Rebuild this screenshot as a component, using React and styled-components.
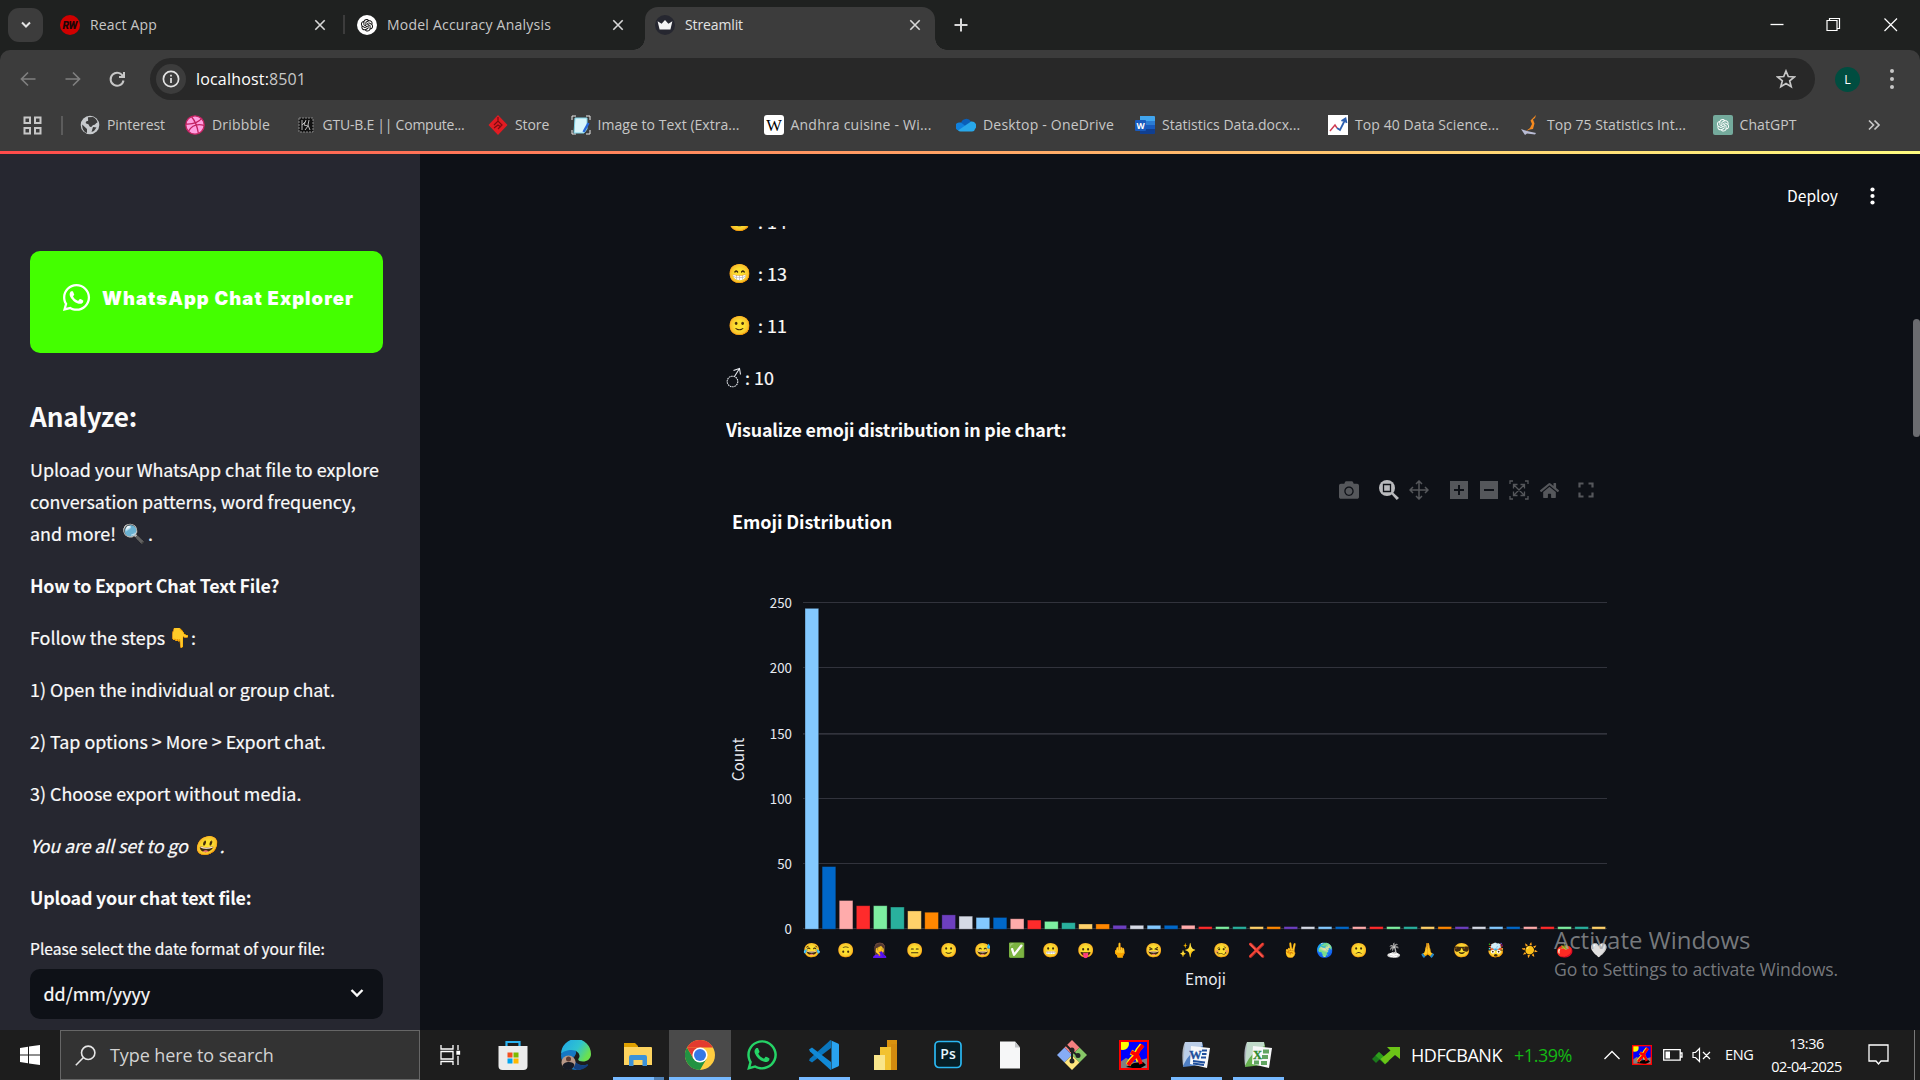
import React from "react";
import styled, { createGlobalStyle, css } from "styled-components";
import { FaWhatsapp, FaCamera, FaHome } from "react-icons/fa";
import { AiOutlineOpenAI } from "react-icons/ai";

const ui = '"Open Sans", "Noto Sans", sans-serif';
const doc = '"Noto Sans CJK SC", "Noto Color Emoji", sans-serif';

const Global = createGlobalStyle`
  * { box-sizing: border-box; }
  body { margin: 0; background: #0e1117; overflow: hidden; }
  p, h2 { margin: 0; }
  svg { display: block; flex: none; }
`;

const Screen = styled.div`
  width: 1920px;
  height: 1080px;
  display: flex;
  flex-direction: column;
  overflow: hidden;
  font-family: ${ui};
`;

const Label = styled.span`
  font-size: ${(p) => p.$size || 14}px;
  letter-spacing: ${(p) => p.$track || 0}px;
  color: ${(p) => p.$color || "#c7c7c7"};
  line-height: 1.3;
  white-space: pre;
`;

/* ---------- browser chrome ---------- */

const TabStrip = styled.header`
  height: 50px;
  flex: none;
  display: flex;
  background: #1f2120;
  padding-left: 8px;
`;

const TabSearch = styled.div`
  width: 35px;
  height: 34px;
  margin: 8px 5px 0 0;
  border-radius: 11px;
  background: #3c3c3c;
  display: flex;
  align-items: center;
  justify-content: center;
`;

const Tab = styled.div`
  width: ${(p) => p.$width}px;
  height: ${(p) => (p.$active ? 43 : 36)}px;
  margin-top: 7px;
  padding: 0 ${(p) => p.$end || 13}px 0 ${(p) => p.$pad}px;
  display: flex;
  align-items: center;
  gap: 10px;
  position: relative;
  ${(p) =>
    p.$active &&
    css`
      background: #3c3c3c;
      border-radius: 13px 13px 0 0;
      padding-bottom: 7px;
      &::before,
      &::after {
        content: "";
        position: absolute;
        bottom: 0;
        width: 12px;
        height: 12px;
      }
      &::before {
        left: -12px;
        background: radial-gradient(circle at 0 0, transparent 11.5px, #3c3c3c 12px);
      }
      &::after {
        right: -12px;
        background: radial-gradient(circle at 100% 0, transparent 11.5px, #3c3c3c 12px);
      }
    `}
  & > svg:last-child { margin-left: auto; }
  & > span { padding-top: 1px; }
`;

const TabDivider = styled.i`
  width: 2px;
  height: 19px;
  margin-top: 15px;
  background: #3c3c3c;
`;

const NewTab = styled.div`
  width: 52px;
  height: 50px;
  display: flex;
  align-items: center;
  justify-content: center;
`;

const WindowButtons = styled.div`
  margin-left: auto;
  height: 49px;
  display: flex;
  & > svg { width: 57.5px; height: 49px; }
`;

const Chrome = styled.div`
  height: 101px;
  flex: none;
  background: #3c3c3c;
  border-radius: 10px 10px 0 0;
`;

const ChromeBack = styled.div`
  background: #1f2120;
  flex: none;
`;

const Toolbar = styled.div`
  height: 58px;
  display: flex;
  align-items: center;
`;

const NavButton = styled.div`
  width: 44.5px;
  display: flex;
  justify-content: center;
`;

const NavGroup = styled.div`
  width: 150px;
  display: flex;
  padding-left: 6px;
`;

const Omnibox = styled.div`
  width: 1665px;
  height: 42px;
  border-radius: 21px;
  background: #282828;
  display: flex;
  align-items: center;
  padding: 0 19px 0 6px;
  & > svg { margin-left: auto; }
`;

const SiteInfo = styled.div`
  width: 30px;
  height: 30px;
  margin-right: 10px;
  border-radius: 50%;
  background: #3c3c3c;
  display: flex;
  align-items: center;
  justify-content: center;
`;

const Avatar = styled.div`
  width: 25px;
  height: 25px;
  margin: 0 30px 0 20px;
  border-radius: 50%;
  background: #004d40;
  color: #fff;
  font-size: 12.5px;
  display: flex;
  align-items: center;
  justify-content: center;
`;

const Bookmarks = styled.nav`
  height: 34px;
  display: flex;
  align-items: center;
  padding-left: 23px;
`;

const AppsButton = styled.div`
  width: 37.5px;
`;

const BookmarkDivider = styled.i`
  width: 2px;
  height: 19px;
  background: #5c5c5c;
`;

const Bookmark = styled.a`
  width: ${(p) => p.$width}px;
  margin-left: ${(p) => p.$lead || 0}px;
  display: flex;
  align-items: center;
  gap: 7px;
`;

const Stripe = styled.div`
  height: 3px;
  flex: none;
  background: linear-gradient(90deg, #ff4b4b, #fffd80);
`;

/* ---------- page ---------- */

const Page = styled.div`
  height: 876px;
  flex: none;
  display: flex;
  background: #0e1117;
  font-family: ${doc};
`;

const Sidebar = styled.aside`
  width: 420px;
  background: #262730;
  padding: 97px 37px 0 30px;
  color: #fafafa;
`;

const Banner = styled.div`
  height: 102px;
  border-radius: 10px;
  background: #44ff00;
  display: flex;
  align-items: center;
  gap: 10px;
  padding: 0 0 9px 31px;
`;

const BannerTitle = styled.span`
  font: 900 18.4px/22px Inter, sans-serif;
  letter-spacing: 1.07px;
  color: #fff;
  white-space: nowrap;
`;

const Heading = styled.h2`
  margin: 43px 0 17px;
  font-size: 26.2px;
  font-weight: 700;
  line-height: 40px;
  letter-spacing: -0.15px;
`;

const Para = styled.p`
  min-height: 32px;
  margin-bottom: 20px;
  font-size: 17.9px;
  line-height: 32px;
  white-space: pre-line;
  color: #fafafa;
  font-weight: ${(p) => (p.$bold ? 700 : 400)};
  font-style: ${(p) => (p.$italic ? "italic" : "normal")};
  letter-spacing: ${(p) => (p.$bold ? -0.22 : p.$italic ? -0.12 : 0)}px;
  -webkit-text-stroke: ${(p) => (p.$bold ? 0 : 0.2)}px #fafafa;
`;

const Emoji = styled.span`
  display: inline-block;
  width: ${(p) => p.$width || 27}px;
  height: 24px;
  text-align: center;
  vertical-align: top;
  margin-top: 5px;
  display: inline-flex;
  justify-content: center;
  font: ${(p) => (p.$italic ? "italic" : "normal")} 18.5px/24px "Noto Color Emoji";
  letter-spacing: 0;
  filter: drop-shadow(0 0 0.7px #000) drop-shadow(0 0 0.5px #000);
`;

const FieldLabel = styled.p`
  margin: 23px 0 9px;
  font-size: 15.62px;
  line-height: 24px;
  white-space: nowrap;
  -webkit-text-stroke: 0.2px #fafafa;
`;

const Select = styled.div`
  height: 50px;
  border-radius: 10px;
  background: #0e1117;
  display: flex;
  align-items: center;
  justify-content: space-between;
  padding: 0 17px 2px 13.5px;
  font-size: 17.9px;
  -webkit-text-stroke: 0.2px #fafafa;
`;

const Main = styled.main`
  width: 1500px;
  position: relative;
`;

const AppHeader = styled.div`
  height: 72px;
  display: flex;
  justify-content: flex-end;
  align-items: center;
  gap: 32px;
  padding: 10px 45px 0 0;
  color: #fff;
  font-size: 15.6px;
  line-height: 24px;
  & > svg { margin-top: 2px; }
`;

const Column = styled.section`
  width: 882px;
  height: 804px;
  margin-left: 306px;
  overflow: hidden;
`;

const Counts = styled.div`
  margin-top: -21px;
`;

const CountRow = styled(Para)`
  display: flex;
  white-space: pre;
`;

const Modebar = styled.div`
  height: 24px;
  margin-top: 33px;
  padding-left: 612.5px;
  display: flex;
  align-items: center;
`;

const ModeIcon = styled.span`
  width: 20px;
  margin-right: ${(p) => p.$gap || 10}px;
  display: flex;
  justify-content: center;
  color: ${(p) => (p.$on ? "#b9babd" : "#55575b")};
`;

const ChartTitle = styled.p`
  margin: 3px 0 0 6px;
  height: 32px;
  font-size: 18px;
  font-weight: 700;
  line-height: 32px;
  letter-spacing: -0.07px;
  color: #fff;
`;

const Plot = styled.svg`
  margin-top: 23px;
  font-family: ${doc};
  .tick { font-size: 13.3px; fill: #e6eaf1; text-anchor: end; }
  .axis { font-size: 15.4px; fill: #e6eaf1; text-anchor: middle; }
  .emoji {
    font: 14px "Noto Color Emoji";
    text-anchor: middle;
    filter: drop-shadow(0 0 0.6px #000);
  }
  .mono { filter: grayscale(1) brightness(1.3); }
`;

const ScrollThumb = styled.div`
  position: absolute;
  right: 0;
  top: 165px;
  width: 7px;
  height: 118px;
  border-radius: 4px;
  background: #6b6c70;
`;

const Watermark = styled.div`
  position: absolute;
  left: 1134px;
  top: 768px;
  display: flex;
  flex-direction: column;
  font-family: ${ui};
  color: rgba(160, 162, 165, 0.72);
  white-space: nowrap;
`;

const WatermarkLine = styled.span`
  font-size: ${(p) => (p.$big ? 24 : 17.6)}px;
  line-height: ${(p) => (p.$big ? 36 : 23)}px;
  letter-spacing: ${(p) => (p.$big ? -0.03 : -0.12)}px;
`;

/* ---------- taskbar ---------- */

const Taskbar = styled.footer`
  height: 50px;
  flex: none;
  display: flex;
  background: #1d1d1d;
`;

const StartButton = styled.div`
  width: 60px;
  display: flex;
  align-items: center;
  justify-content: center;
`;

const SearchBox = styled.div`
  width: 360px;
  border: 1px solid #666;
  background: #333;
  display: flex;
  align-items: center;
  gap: 14px;
  padding: 1px 0 0 14px;
`;

const AppButton = styled.div`
  width: ${(p) => p.$width || 62}px;
  background: ${(p) => (p.$active ? "#4a4a4a" : "transparent")};
  display: flex;
  flex-direction: column;
  align-items: center;
`;

const AppIcon = styled.div`
  height: 47px;
  padding-top: 3px;
  display: flex;
  align-items: center;
`;

const Running = styled.i`
  width: ${(p) => p.$width || 51}px;
  height: 3px;
  background: ${(p) =>
    p.$stacked ? "linear-gradient(90deg, #76b9ff 41px, #4f80b5 41px)" : "#76b9ff"};
`;

const Tray = styled.div`
  margin-left: auto;
  width: 548px;
  display: flex;
  align-items: center;
`;

const TrayCell = styled.div`
  width: ${(p) => p.$width}px;
  display: flex;
  & > span { padding-top: 1px; }
`;

const Clock = styled.div`
  width: 76px;
  margin-right: 23px;
  display: flex;
  flex-direction: column;
  align-items: center;
  gap: 4px;
  & > span { line-height: 19px; }
`;

const ShowDesktop = styled.i`
  width: 1px;
  height: 50px;
  margin-left: 25px;
  background: #7a7a7a;
`;

/* ---------- drawings ---------- */

const Close = () => (
  <svg width="14" height="14" viewBox="0 0 14 14" stroke="#d8d8d8" strokeWidth="1.6">
    <path d="M2.300 2.300l9.400 9.400M11.700 2.300L2.300 11.700" />
  </svg>
);

const Knot = ({ size, bg, fg, r }) => (
  <svg width={size} height={size} viewBox="0 0 20 20" color={fg}>
    <rect width="20" height="20" rx={r} fill={bg} />
    <AiOutlineOpenAI x="2" y="2" size={16} />
  </svg>
);

const favicons = {
  react: (
    <svg width="20" height="20" viewBox="0 0 20 20">
      <circle cx="10" cy="10" r="10" fill="#d00000" />
      <text x="9.7" y="14" fontSize="10.5" fontWeight="900" fontStyle="italic" fontFamily="Roboto" textAnchor="middle" fill="#1b0606" letterSpacing="-0.6">RW</text>
    </svg>
  ),
  crown: (
    <svg width="20" height="20" viewBox="0 0 20 20">
      <circle cx="10" cy="10" r="10" fill="#262730" />
      <path d="M2.6 6.2l4 2.6L10 5l3.4 3.8 4-2.6-2 8.2H4.600z" fill="#f4f4f4" />
    </svg>
  ),
  globe: (
    <svg width="20" height="20" viewBox="0 0 20 20">
      <circle cx="10" cy="10" r="9.300" fill="#c7cacd" />
      <path d="M2.200 9.500l4.800 4.500v4c-3-.9-5-4-4.800-8.500zM8 2.200l5-.3c2.500 1.200 4 3 4.500 5.500-2 .3-2 2.500-4.200 2.600-1.300.2-1 2-2.500 2-2 0-1.200-3-4-3.200-1.500-.2-1.500-2.500.5-2.800 1.700 0 .3-2 .7-3.800z" fill="#3c3c3c" />
      <path d="M13 12l3.500.5-2.500 3.500-2.500 1z" fill="#3c3c3c" />
    </svg>
  ),
  dribbble: (
    <svg width="20" height="20" viewBox="0 0 20 20" fill="none" stroke="#c32361" strokeWidth="1.3">
      <circle cx="10" cy="10" r="9.200" fill="#ff9fe0" />
      <path d="M6.500 1.700c3.500 4 5.800 9.500 6.800 16.300M1 9c6 .3 12-1 15.500-5.300M3.500 16.300c3-5.500 8-8 15.500-6" />
    </svg>
  ),
  gtu: (
    <svg width="20" height="20" viewBox="0 0 20 20">
      <rect x="3" y="3" width="14" height="14" fill="#111" stroke="#888" strokeWidth="1" strokeDasharray="2 1" />
      <path d="M6 5v10M6 10l4-4M10 5l-2 5 4 1-3 4M13 5l-1 5 2 5" stroke="#bbb" strokeWidth="1" fill="none" />
    </svg>
  ),
  store: (
    <svg width="20" height="20" viewBox="0 0 20 20">
      <path d="M10 0l9.500 10L10 20 .5 10z" fill="#e11b22" />
      <path d="M6 10l4-4 4 4-4 4M10 2v4M6 13l4-3 3 2" stroke="#7d0b10" strokeWidth="1.200" fill="none" />
    </svg>
  ),
  image: (
    <svg width="20" height="20" viewBox="0 0 20 20">
      <path d="M1 5V1h4M15 1h4v4M1 15v4h4M15 19h4v-4" stroke="#e8e8e8" fill="none" />
      <path d="M4 3h12v11l-3 4H3z" fill="#d9f5fb" stroke="#7fd3e8" />
      <path d="M17.500 8l-5 9" stroke="#2666d8" strokeWidth="2.400" />
    </svg>
  ),
  wiki: (
    <svg width="20" height="20" viewBox="0 0 20 20">
      <rect width="20" height="20" rx="3" fill="#fff" />
      <text x="10" y="15.500" textAnchor="middle" fontFamily="Liberation Serif" fontSize="16.500">W</text>
    </svg>
  ),
  drive: (
    <svg width="20" height="20" viewBox="0 0 20 20">
      <path d="M5 8a5.500 5.500 0 0110-1.500l-7 6z" fill="#0a5fb8" />
      <path d="M5 7.500l10 8H4a4 4 0 01-1-8z" fill="#1080dc" />
      <path d="M15 6.500a4.500 4.500 0 014 7.500 3 3 0 01-3 2.500H4.500a4 4 0 01-2.500-1z" fill="#28a8ea" />
    </svg>
  ),
  word: (
    <svg width="20" height="20" viewBox="0 0 20 20">
      <path d="M5 1h14a1 1 0 011 1v4H5z" fill="#41a5ee" />
      <path d="M5 6h15v4H5z" fill="#2b7cd3" />
      <path d="M5 10h15v4H5z" fill="#185abd" />
      <path d="M5 14h15v4a1 1 0 01-1 1H5z" fill="#103f91" />
      <rect y="5" width="11" height="11" rx="1" fill="#185abd" />
      <text x="5.500" y="13.700" textAnchor="middle" fontFamily="Open Sans" fontSize="8.500" fontWeight="700" fill="#fff">W</text>
    </svg>
  ),
  trend: (
    <svg width="20" height="20" viewBox="0 0 20 20">
      <rect width="20" height="20" fill="#fff" />
      <path d="M2 16l5-6 2 3" stroke="#cf3a50" strokeWidth="1.400" fill="none" />
      <path d="M9 13l3 2 5-10M13.500 6L17.500 3.500l1 4.500" stroke="#2b5fb0" strokeWidth="1.800" fill="none" />
    </svg>
  ),
  jump: (
    <svg width="20" height="20" viewBox="0 0 20 20">
      <path d="M16 0l-1 3-2 1.500 1.500 4L13 14l-3 .5L6 16l4-3 2-4-1.500-3.500z" fill="#f68a1f" />
      <path d="M1 14l6 2 9 2-1 1.500-8-1-2 1.500z" fill="#b9bcd4" />
    </svg>
  ),
};

const XmingIcon = ({ size }) => (
  <svg width={size} height={size} viewBox="0 0 30 30">
    <rect x="1" y="1" width="28" height="28" fill="#0000ff" />
    <path d="M1 22l6-4 8 4 14-4v11H1z" fill="#808080" />
    <path d="M7 27l8-4 9-1 3 3-7 4z" fill="#000" />
    <circle cx="4" cy="4" r="6" fill="#ffff00" />
    <path d="M23 5l-4 5-3 6-4 4-3 5M12 12l5 3 3 6" stroke="#ff0" strokeWidth="5" fill="none" />
    <path d="M24 5l-4 5-3 6-4 4-4 5M12 12l6 3 3 6 1 3" stroke="#ff0000" strokeWidth="3.800" fill="none" />
    <rect x="1" y="1" width="28" height="28" fill="none" stroke="#ff0000" strokeWidth="2" />
  </svg>
);

const OfficeIcon = ({ dark, mid, letter }) => (
  <svg width="30" height="30" viewBox="0 0 30 30">
    <path d="M4 2h17l1 4-2 19-18 2z" fill={mid} />
    <path d="M4 2h17l.5 4C13 10 7 15 2 26 1 16 1 8 4 2z" fill="#dfe8f4" opacity=".75" />
    <path d="M10 6l19 2-3 20-17-4z" fill="#f7f8fa" />
    {letter === "W" ? (
      <path d="M21 10.500h5M21 14h4.500M20 17.500h5M12 21l12 1.500M12 23.500l11 1.500" stroke={dark} strokeWidth="1.800" />
    ) : (
      <path d="M20 9.500h6v4h-6zM19 15h6v4h-6zM11 20.500h5v4h-5zM18 21h6v4h-6z" fill={dark} opacity=".75" />
    )}
    <text x="14.500" y="18.500" textAnchor="middle" fontFamily="Liberation Serif" fontWeight="700" fontSize="12.500" fill={dark} stroke={dark} strokeWidth=".3">{letter}</text>
  </svg>
);

const taskApps = [
  {
    icon: (
      <svg width="30" height="30" viewBox="0 0 30 30">
        <path d="M8.500 6.500V2h13v4.500" fill="none" stroke="#2ab3f3" strokeWidth="2.200" />
        <path d="M.5 6h29v20a4 4 0 01-4 4h-21a4 4 0 01-4-4z" fill="#ececec" />
        <path d="M9.500 12.500h5v5h-5z" fill="#f25022" /><path d="M15.500 12.500h5v5h-5z" fill="#7fba00" />
        <path d="M9.500 18.500h5v5h-5z" fill="#00a4ef" /><path d="M15.500 18.500h5v5h-5z" fill="#ffb900" />
      </svg>
    ),
  },
  {
    icon: (
      <svg width="30" height="30" viewBox="0 0 30 30">
        <defs>
          <linearGradient id="edge" x1="0" x2="1" y1="0" y2=".5">
            <stop offset="0" stopColor="#1fa4e8" /><stop offset=".6" stopColor="#2fc3d0" /><stop offset="1" stopColor="#6be04f" />
          </linearGradient>
        </defs>
        <path d="M0 15C1 9 7 7.500 12 9c5 1.500 3 6 1 8-1 6 6 10 14 7.500C24 28 20 30 15 30A15 15 0 010 15z" fill="#1578c4" />
        <path d="M0 14A15 15 0 0130 14c0 5-4 7.500-8 7.500-4 0-6-1.500-4-3.500 2-3.500-2-8-7.500-8C6 10 1 12 0 14z" fill="url(#edge)" />
        <path d="M13 16c-.5 6 5 11 13 8.500 1-.4 1.500.5 1 1-2.500 3-7 4.500-11 4.500-5-1-7-10-3-14z" fill="#14407f" />
        <circle cx="7.500" cy="22.500" r="7" fill="#b89888" />
        <circle cx="7.500" cy="19" r="2.500" fill="#5d3b32" />
        <path d="M1.500 26c1-5 11-5 12-1-1 3.500-3.500 5-6 5s-5-1-6-4z" fill="#171b26" />
      </svg>
    ),
  },
  {
    icon: (
      <svg width="30" height="30" viewBox="0 0 30 30">
        <path d="M1 3h11l3 3v4H1z" fill="#dfa000" />
        <path d="M1 7h27a1 1 0 011 1v17H1z" fill="#fdd35f" />
        <path d="M6 26V17a2 2 0 012-2h14a2 2 0 012 2v9h-4.500v-6h-9v6z" fill="#3c92d9" />
      </svg>
    ),
    run: 51,
    stacked: true,
  },
  {
    icon: (
      <svg width="30" height="30" viewBox="0 0 30 30">
        <circle cx="15" cy="15" r="15" fill="#ffcd40" />
        <path d="M2 7.500A15 15 0 0128 7.500H15z" fill="#e33b2e" />
        <path d="M2 7.500a15 15 0 0013 22.500l6.500-11.200L8.500 18.700z" fill="#229342" />
        <path d="M2 7.500L8.500 18.700 15 7.500z" fill="#e33b2e" />
        <circle cx="15" cy="15" r="7.600" fill="#fff" />
        <circle cx="15" cy="15" r="6" fill="#3578e5" />
      </svg>
    ),
    run: 62,
    active: true,
  },
  { icon: <FaWhatsapp size={34} color="#25d366" /> },
  {
    icon: (
      <svg width="30" height="30" viewBox="0 0 30 30">
        <path d="M22 0v8L3 22.500l-3-2 1-2L21 .5z" fill="#0a76bd" />
        <path d="M22 30v-8L3 7.500l-3 2 1 2L21 29.500z" fill="#1189d6" />
        <path d="M21 0l8 3.500a2 2 0 011 2v19a2 2 0 01-1 2L21 30l1.500-1V1z" fill="#29a3f0" />
      </svg>
    ),
    run: 51,
  },
  {
    icon: (
      <svg width="30" height="30" viewBox="0 0 30 30">
        <path d="M16 0h10v30H16z" fill="#d9920f" /><path d="M20 4h6v26h-6z" fill="#cd8410" opacity=".5" />
        <path d="M9 7h11v23H9z" fill="#f2c230" />
        <path d="M3 15h11v15H3z" fill="#f9e58a" />
      </svg>
    ),
  },
  {
    icon: (
      <svg width="30" height="30" viewBox="0 0 30 30">
        <rect x="2" y="1.500" width="26" height="26" rx="4" fill="#061e26" stroke="#2bb8f2" strokeWidth="1.700" />
        <text x="15" y="19.300" textAnchor="middle" fontFamily="Open Sans" fontWeight="600" fontSize="14" fill="#e6f6fd">Ps</text>
      </svg>
    ),
  },
  {
    icon: (
      <svg width="30" height="30" viewBox="0 0 30 30">
        <path d="M5 1.500h15l5 6v21H5z" fill="#f6f7f8" /><path d="M20 1.500v6h5z" fill="#c4c6c8" />
      </svg>
    ),
  },
  {
    icon: (
      <svg width="30" height="30" viewBox="0 0 30 30">
        <path d="M15 0l7.500 7.500L15 15 7.500 7.500z" fill="#f58080" />
        <path d="M7.500 7.500L15 15l-7.500 7.500L0 15z" fill="#86acf5" />
        <path d="M22.500 7.500L30 15l-7.500 7.500L15 15z" fill="#86c767" />
        <path d="M15 15l7.500 7.500L15 30l-7.500-7.500z" fill="#ffe57d" />
        <path d="M9 5l6 6v10M15 11l6 5" stroke="#222" strokeWidth="2" fill="none" />
        <circle cx="15" cy="10" r="2.500" fill="#222" /><circle cx="15" cy="21" r="2.500" fill="#222" /><circle cx="21" cy="15.500" r="2.500" fill="#222" />
      </svg>
    ),
  },
  { icon: <XmingIcon size={30} /> },
  { icon: <OfficeIcon dark="#1f4f9c" mid="#4f7fc4" letter="W" />, run: 51 },
  { icon: <OfficeIcon dark="#2f8a2f" mid="#66b04e" letter="X" />, run: 51 },
];

/* ---------- data ---------- */

const bookmarks = [
  ["globe", "Pinterest", 105, -0.07],
  ["dribbble", "Dribbble", 110.500, 0.19],
  ["gtu", "GTU-B.E || Compute...", 192.500, -0.24],
  ["store", "Store", 82.500, -0.08],
  ["image", "Image to Text (Extra...", 193, 0.04],
  ["wiki", "Andhra cuisine - Wi...", 192.500, 0.21],
  ["drive", "Desktop - OneDrive", 179, 0.2],
  ["word", "Statistics Data.docx...", 193, 0.02],
  ["trend", "Top 40 Data Science...", 192, 0.08],
  ["jump", "Top 75 Statistics Int...", 192.500, 0.05],
];

const palette = ["#83c9ff", "#0068c9", "#ffabab", "#ff2b2b", "#7defa1", "#29b09d", "#ffd16a", "#ff8700", "#6d3fc0", "#d5dae5"];
const head = [246, 48, 22, 18, 18, 17, 14, 13, 11, 10, 9, 9, 8, 7, 6, 5, 4, 4, 3, 3, 3, 3, 3];
const counts = Array.from({ length: 47 }, (_, i) => head[i] || 2);
const ticks = ["😂", "🙃", "🤦‍♀️", "😑", "🙂", "😅", "✅", "😬", "😛", "🖕", "😆", "✨", "🥴", "❌", "✌️", "🌍", "🙁", "🏝️", "🙏", "😎", "🤯", "☀️", "🍅", "🤍"];
const STEP = 17.106;
const UNIT = 1.3043;
const BASE = 929.2;

const Chart = () => (
  <Plot width="882" height="440" viewBox="726 560 882 440">
    {[0, 50, 100, 150, 200, 250].map((v) => (
      <g key={v}>
        <rect x="803" y={Math.round(BASE - v * UNIT - 0.9)} width="804" height={v === 150 ? 1.7 : 1} fill="#31333c" />
        <text className="tick" x="792" y={BASE - v * UNIT + 5}>{v}</text>
      </g>
    ))}
    {counts.map((c, i) => (
      <rect key={i} x={803.300 + STEP * i + 1.710} y={BASE - c * UNIT} width="13.685" height={c * UNIT} fill={palette[i % 10]} stroke="#0e1117" strokeOpacity=".4" strokeWidth=".8" />
    ))}
    {ticks.map((t, i) => (
      <text key={i} className={t.startsWith("🏝") ? "emoji mono" : "emoji"} x={812 + STEP * 2 * i} y="954.500">{t}</text>
    ))}
    <text className="axis" x="1205.500" y="984.800">Emoji</text>
    <text className="axis" transform="translate(743.500 759.500) rotate(-90)">Count</text>
  </Plot>
);

export default function App() {
  return (
    <Screen>
      <Global />
      <TabStrip>
        <TabSearch>
          <svg width="14" height="14" viewBox="0 0 14 14" fill="none" stroke="#e3e3e3" strokeWidth="2"><path d="M3 4.500l4 4 4-4" /></svg>
        </TabSearch>
        <Tab $width={295} $pad={12} $end={16}>
          {favicons.react}<Label $track={0.15}>React App</Label><Close />
        </Tab>
        <TabDivider />
        <Tab $width={300} $pad={12} $end={20}>
          <Knot size={20} bg="#fff" fg="#111" r={10} />
          <Label $track={0.22}>Model Accuracy Analysis</Label>
          <Close />
        </Tab>
        <Tab $width={290} $pad={10} $active>
          {favicons.crown}<Label $track={-0.12} $color="#e3e3e3">Streamlit</Label><Close />
        </Tab>
        <NewTab>
          <svg width="16" height="16" viewBox="0 0 16 16" stroke="#d8d8d8" strokeWidth="2"><path d="M8 1.500v13M1.500 8h13" /></svg>
        </NewTab>
        <WindowButtons>
          <svg viewBox="0 0 57.500 49"><path d="M22.500 24.500h13" stroke="#fff" strokeWidth="1.300" /></svg>
          <svg viewBox="0 0 57.500 49" fill="none" stroke="#fff" strokeWidth="1.200"><path d="M22 20.500h10v10h-10zM24.500 20.500v-2h10v10h-2.500" /></svg>
          <svg viewBox="0 0 57.500 49" stroke="#fff" strokeWidth="1.200"><path d="M21.500 18.500l12.500 12.500M34 18.500L21.500 31" /></svg>
        </WindowButtons>
      </TabStrip>

      <ChromeBack>
        <Chrome>
          <Toolbar>
            <NavGroup>
              <NavButton><svg width="18" height="18" viewBox="0 0 18 18" fill="none" stroke="#7f7f7f" strokeWidth="1.700"><path d="M16.500 9H3M9 2.500L2.500 9 9 15.500" /></svg></NavButton>
              <NavButton><svg width="18" height="18" viewBox="0 0 18 18" fill="none" stroke="#7f7f7f" strokeWidth="1.700"><path d="M1.500 9H15M9 2.500L15.500 9 9 15.500" /></svg></NavButton>
              <NavButton><svg width="18" height="18" viewBox="0 0 18 18" fill="none" stroke="#c7c7c7" strokeWidth="2"><path d="M15 6.500A6.500 6.500 0 1015.500 10.500M16 2v5h-5" /></svg></NavButton>
            </NavGroup>
            <Omnibox>
              <SiteInfo>
                <svg width="18" height="18" viewBox="0 0 18 18" fill="none" stroke="#e3e3e3" strokeWidth="1.700"><circle cx="9" cy="9" r="7.600" /><path d="M9 8v5M9 4.800v1.700" /></svg>
              </SiteInfo>
              <Label $size={16} $track={0.18} $color="#fff">localhost:</Label>
              <Label $size={16} $track={0.1}>8501</Label>
              <svg width="20" height="20" viewBox="0 0 20 20" fill="none" stroke="#c7c7c7" strokeWidth="1.700"><path d="M10 2l2.300 5.500 6 .5-4.600 3.900 1.500 5.800L10 14.500l-5.200 3.200 1.500-5.800L1.700 8l6-.5z" /></svg>
            </Omnibox>
            <Avatar>L</Avatar>
            <svg width="4" height="20" viewBox="0 0 4 20" fill="#c7c7c7"><circle cx="2" cy="2" r="2" /><circle cx="2" cy="10" r="2" /><circle cx="2" cy="18" r="2" /></svg>
          </Toolbar>
          <Bookmarks>
            <AppsButton>
              <svg width="19" height="19" viewBox="0 0 19 19" fill="none" stroke="#c7c7c7" strokeWidth="2"><path d="M1.500 1.500h5.500v5.500h-5.500zM12 1.500h5.500v5.500H12zM1.500 12h5.500v5.500h-5.500zM12 12h5.500v5.500H12z" /></svg>
            </AppsButton>
            <BookmarkDivider />
            {bookmarks.map(([icon, name, width, track], i) => (
              <Bookmark key={name} $width={width} $lead={i === 0 ? 17.500 : 0}>
                {favicons[icon]}<Label $track={track}>{name}</Label>
              </Bookmark>
            ))}
            <Bookmark $width={155.500}>
              <Knot size={20} bg="#74aa9c" fg="#fff" r={2} /><Label $track={0.07}>ChatGPT</Label>
            </Bookmark>
            <svg width="12" height="12" viewBox="0 0 12 12" fill="none" stroke="#c7c7c7" strokeWidth="1.700"><path d="M1 1.500L5.500 6 1 10.500M6.500 1.500L11 6l-4.500 4.500" /></svg>
          </Bookmarks>
        </Chrome>
      </ChromeBack>
      <Stripe />

      <Page>
        <Sidebar>
          <Banner>
            <FaWhatsapp size={31} color="#fff" />
            <BannerTitle>WhatsApp Chat Explorer</BannerTitle>
          </Banner>
          <Heading>Analyze:</Heading>
          <Para>
            Upload your WhatsApp chat file to explore{"\n"}conversation patterns, word frequency,{"\n"}and more! <Emoji $width={28}>🔍</Emoji>.
          </Para>
          <Para $bold>How to Export Chat Text File?</Para>
          <Para>Follow the steps <Emoji $width={22}>👇</Emoji>:</Para>
          <Para>1) Open the individual or group chat.</Para>
          <Para>2) Tap options &gt; More &gt; Export chat.</Para>
          <Para>3) Choose export without media.</Para>
          <Para $italic>You are all set to go <Emoji $italic $width={28}>😃</Emoji>.</Para>
          <Para $bold>Upload your chat text file:</Para>
          <FieldLabel>Please select the date format of your file:</FieldLabel>
          <Select>
            dd/mm/yyyy
            <svg width="18" height="12" viewBox="0 0 18 12" fill="none" stroke="#fafafa" strokeWidth="2.400"><path d="M3.500 3L9 8.500 14.500 3" /></svg>
          </Select>
        </Sidebar>

        <Main>
          <AppHeader>
            <span>Deploy</span>
            <svg width="5" height="18" viewBox="0 0 5 18" fill="#fff"><circle cx="2.500" cy="2.500" r="2.100" /><circle cx="2.500" cy="9" r="2.100" /><circle cx="2.500" cy="15.500" r="2.100" /></svg>
          </AppHeader>
          <Column>
            <Counts>
              <CountRow><Emoji $width={28}>🙂</Emoji> : 14</CountRow>
              <CountRow><Emoji $width={28}>😁</Emoji> : 13</CountRow>
              <CountRow><Emoji $width={28}>🙂</Emoji> : 11</CountRow>
              <CountRow>
                <svg width="15" height="32" viewBox="0 0 15 32" fill="none" stroke="#e6e9ee" strokeWidth="1.100"><circle cx="6.500" cy="20.500" r="5.300" strokeDasharray="1.600 .7" /><path d="M8.500 15.500l5-8M7.500 9.500l6-2 1 6" /></svg> : 10
              </CountRow>
              <Para $bold>Visualize emoji distribution in pie chart:</Para>
            </Counts>
            <Modebar>
              <ModeIcon $gap={20.500}><FaCamera size={20} /></ModeIcon>
              <ModeIcon $on>
                <svg width="20" height="20" viewBox="0 0 20 20" fill="currentColor"><circle cx="8" cy="8" r="8" /><path d="M4.500 4.500h7v7h-7z" fill="none" stroke="#0e1117" strokeWidth="1.300" /><path d="M13 11.500l7 6.500-2.300 2-6.200-7z" /></svg>
              </ModeIcon>
              <ModeIcon $gap={20}>
                <svg width="20" height="20" viewBox="0 0 20 20" fill="none" stroke="currentColor" strokeWidth="1.500"><path d="M10 1v18M1 10h18M7 4l3-3 3 3M7 16l3 3 3-3M4 7l-3 3 3 3M16 7l3 3-3 3" /></svg>
              </ModeIcon>
              <ModeIcon>
                <svg width="18" height="18" viewBox="0 0 18 18"><path d="M0 0h18v18H0z" fill="currentColor" /><path d="M9 4v10M4 9h10" stroke="#0e1117" strokeWidth="2" /></svg>
              </ModeIcon>
              <ModeIcon>
                <svg width="18" height="18" viewBox="0 0 18 18"><path d="M0 0h18v18H0z" fill="currentColor" /><path d="M4 9h10" stroke="#0e1117" strokeWidth="2" /></svg>
              </ModeIcon>
              <ModeIcon>
                <svg width="20" height="20" viewBox="0 0 20 20" fill="none" stroke="currentColor" strokeWidth="1.300"><path d="M1 4V1h3M16 1h3v3M19 16v3h-3M4 19H1v-3M5 5l10 10M15 5L5 15M4.500 8.500v-4h4M11.500 4.500h4v4M15.500 11.500v4h-4M8.500 15.500h-4v-4" /></svg>
              </ModeIcon>
              <ModeIcon $gap={17}><FaHome size={19} /></ModeIcon>
              <ModeIcon>
                <svg width="16" height="16" viewBox="0 0 16 16" fill="none" stroke="currentColor" strokeWidth="2.200"><path d="M1.500 5.500v-4h4M10.500 1.500h4v4M14.500 10.500v4h-4M5.500 14.500h-4v-4" /></svg>
              </ModeIcon>
            </Modebar>
            <ChartTitle>Emoji Distribution</ChartTitle>
            <Chart />
          </Column>
          <ScrollThumb />
          <Watermark>
            <WatermarkLine $big>Activate Windows</WatermarkLine>
            <WatermarkLine>Go to Settings to activate Windows.</WatermarkLine>
          </Watermark>
        </Main>
      </Page>

      <Taskbar>
        <StartButton>
          <svg width="20" height="20" viewBox="0 0 20 20" fill="#fff"><path d="M0 3l8-1.200v7.700H0zM9 1.600L20 0v9.500H9zM0 10.500h8v7.700L0 17zM9 10.500h11V20L9 18.400z" /></svg>
        </StartButton>
        <SearchBox>
          <svg width="21" height="21" viewBox="0 0 21 21" fill="none" stroke="#e6e6e6" strokeWidth="1.600"><circle cx="13.200" cy="7.800" r="6.700" /><path d="M8.500 12.500L.8 20.200" /></svg>
          <Label $size={18} $track={-0.1} $color="#d2d2d2">Type here to search</Label>
        </SearchBox>
        <AppButton $width={61}>
          <AppIcon>
            <svg width="22" height="20" viewBox="0 0 22 20" fill="none" stroke="#fff" strokeWidth="1.300"><path d="M1 0v4h12V0M1 6.500h12v7.500H1zM1 20v-3.500h12V20M18 0v5M18 11v9" /><path d="M17 6.500h2.500v2.500H17z" fill="#fff" /></svg>
          </AppIcon>
        </AppButton>
        <AppButton $width={64}>
          <AppIcon>{taskApps[0].icon}</AppIcon>
        </AppButton>
        {taskApps.slice(1).map((a, i) => (
          <AppButton key={i} $active={a.active}>
            <AppIcon>{a.icon}</AppIcon>
            {a.run && <Running $width={a.run} $stacked={a.stacked} />}
          </AppButton>
        ))}
        <Tray>
          <TrayCell $width={39}>
            <svg width="29" height="19" viewBox="0 0 29 19"><path d="M0 13l7-7 4 4-7 7z" fill="#1b7a1b" /><path d="M7 6l10 9-4 3.500L3.500 9.500z" fill="#2e9e1c" /><path d="M13 18l10-9 5 4V1H15l3.500 3.500L8.500 13z" fill="#6cc417" /></svg>
          </TrayCell>
          <TrayCell $width={103}><Label $size={18} $track={-0.44} $color="#fff">HDFCBANK</Label></TrayCell>
          <TrayCell $width={90}><Label $size={18} $track={-0.46} $color="#14b814">+1.39%</Label></TrayCell>
          <TrayCell $width={28}><svg width="16" height="10" viewBox="0 0 16 10" fill="none" stroke="#fff" strokeWidth="1.300"><path d="M.5 9L8 1.500 15.500 9" /></svg></TrayCell>
          <TrayCell $width={31}><XmingIcon size={20} /></TrayCell>
          <TrayCell $width={29}><svg width="20" height="12" viewBox="0 0 20 12" fill="none" stroke="#fff" strokeWidth="1.300"><path d="M.7.700h16.500v10.500H.7zM17.500 4h1.500v4h-1.500" /><path d="M2.500 2.500h4.500v7H2.500z" fill="#fff" stroke="none" /></svg></TrayCell>
          <TrayCell $width={33}><svg width="19" height="16" viewBox="0 0 19 16" fill="none" stroke="#fff" strokeWidth="1.200"><path d="M1 5.500h2.500L7.500 1.500v13L3.500 10.500H1zM11 5l7 7M18 5l-7 7" /></svg></TrayCell>
          <TrayCell $width={43.500}><Label $size={14.500} $track={-0.3} $color="#fff">ENG</Label></TrayCell>
          <Clock>
            <Label $size={14.500} $track={-0.500} $color="#fff">13:36</Label>
            <Label $size={14.500} $track={-0.500} $color="#fff">02-04-2025</Label>
          </Clock>
          <svg width="21" height="22" viewBox="0 0 21 22" fill="none" stroke="#fff" strokeWidth="1.300"><path d="M1 1h19v16h-7l-2.500 3L8 17H1z" /></svg>
          <ShowDesktop />
        </Tray>
      </Taskbar>
    </Screen>
  );
}
